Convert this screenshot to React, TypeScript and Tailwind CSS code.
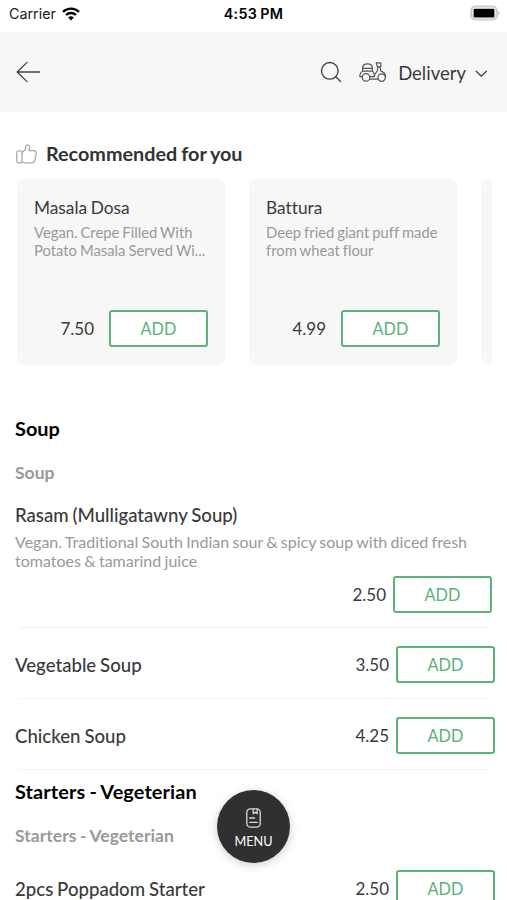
interface Dish {
  name: string;
  description?: string;
  price: string;
}

const recommended: Dish[] = [
  { name: "Masala Dosa", description: "Vegan. Crepe Filled With Potato Masala Served Wi...", price: "7.50" },
  { name: "Battura", description: "Deep fried giant puff made from wheat flour", price: "4.99" },
];

const soups: Dish[] = [
  { name: "Vegetable Soup", price: "3.50" },
  { name: "Chicken Soup", price: "4.25" },
];

function StatusBar() {
  return (
    <div className="h-8 shrink-0 px-2 grid grid-cols-3 items-start font-[Inter,sans-serif] text-black">
      <div className="flex items-center gap-1.5 pt-1 pl-px text-[14.3px] leading-5 text-[#222]">
        <span>Carrier</span>
        <svg className="text-black" width="18" height="14" viewBox="0 0 18 14" fill="none" stroke="currentColor" strokeWidth="2.3">
          <path d="M1 4.9a11.5 11.5 0 0 1 16 0" />
          <path d="M4 8a7.2 7.2 0 0 1 10 0" />
          <path d="M9 13.4 6.2 10.5a4 4 0 0 1 5.6 0Z" fill="currentColor" stroke="none" />
        </svg>
      </div>
      <div className="pt-1 text-center text-[14.3px] leading-5 font-semibold tracking-[0.3px]">4:53 PM</div>
      <div className="flex justify-end pt-[5px]">
        <svg className="-mr-px" width="30" height="16" viewBox="0 0 30 16">
          <rect x="1.3" y="1.5" width="25.4" height="13" rx="4" fill="#fff" stroke="#cbcbcb" strokeWidth="2.2" />
          <rect x="3.6" y="3.8" width="20.8" height="8.6" rx="1" fill="#000" />
          <path d="M28.2 6c1.6.6 1.6 3.6 0 4.2Z" fill="#b5b5b5" />
        </svg>
      </div>
    </div>
  );
}

function ScooterIcon() {
  return (
    <svg width="28" height="20" viewBox="0 0 28 20" fill="none" stroke="#555" strokeWidth="1.2" strokeLinecap="round" strokeLinejoin="round">
      <circle cx="7" cy="15.4" r="3.8" />
      <circle cx="22.6" cy="15.6" r="3.7" />
      <path d="M3.2 14.6H.8c0-2.6 1.2-4.8 3.2-5.4h9.6c1.2 1.4 1.8 3.2 1.8 5.4h-4.6" />
      <path d="M3.6 9V6.2C3.6 3.2 5.6 1.8 8.5 1.8s4.9 1.4 4.9 4.4V9M3.6 6.4h9.8" />
      <path d="M17.2.8h4.6v4h-3.4Z" />
      <path d="M18.6 4.8v3c0 2-3.2 3.2-3.2 6.8M21 4.8l.8 4.4c3 .8 4.8 2.8 4.8 5.4M10.4 17.2h8.8" />
    </svg>
  );
}

function Header() {
  return (
    <header className="h-20 shrink-0 flex items-center bg-[#f7f7f7] pl-4 pr-[19px] text-[#3a3a3a]">
      <svg width="25" height="22" viewBox="0 0 25 22" fill="none" stroke="#444" strokeWidth="1.3" strokeLinecap="round" strokeLinejoin="round">
        <path d="M23.6 11H1.2M11 1.4 1.2 11 11 20.6" />
      </svg>
      <svg className="ml-auto" width="22" height="22" viewBox="0 0 22 22" fill="none" stroke="#444" strokeWidth="1.4" strokeLinecap="round">
        <circle cx="9.8" cy="9.8" r="8.3" />
        <path d="m15.8 15.8 4.7 4.7" />
      </svg>
      <div className="ml-[17px]">
        <ScooterIcon />
      </div>
      <span className="ml-[11px] mt-0.5 text-[18.5px] leading-6">Delivery</span>
      <svg className="ml-[9px] mt-1" width="13" height="8" viewBox="0 0 13 8" fill="none" stroke="#444" strokeWidth="1.3" strokeLinecap="round" strokeLinejoin="round">
        <path d="m1.2 1.2 5.1 5.1 5.1-5.1" />
      </svg>
    </header>
  );
}

function AddButton() {
  return (
    <button className="w-[99px] h-[37px] pt-0.5 shrink-0 rounded-[3px] border-2 border-[#5bb37c] bg-white text-[16.3px] leading-none text-[#58b17a]">
      ADD
    </button>
  );
}

function RecommendedCard({ dish }: { dish: Dish }) {
  return (
    <div className="w-52 h-[186px] shrink-0 flex flex-col rounded-lg bg-[#f7f7f7] pl-[17px] pr-[17px] pt-[17px] pb-[18px]">
      <h3 className="text-[17.3px] leading-[23px] text-[#3a3a3a]">{dish.name}</h3>
      <p className="mt-1 -mr-2 w-[176px] text-[14.8px] leading-[18px] text-[#999]">{dish.description}</p>
      <div className="mt-auto flex items-center justify-end gap-[15px]">
        <span className="pt-px text-[17px] text-[#3a3a3a]">{dish.price}</span>
        <AddButton />
      </div>
    </div>
  );
}

function DishRow({ dish }: { dish: Dish }) {
  return (
    <div className="h-[71px] flex items-center pt-1 pl-[15px] pr-3">
      <h3 className="pt-[3px] text-[18.6px] font-medium text-[#3a3a3a]">{dish.name}</h3>
      <span className="ml-auto mr-[7px] pt-px text-[17px] text-[#3a3a3a]">{dish.price}</span>
      <AddButton />
    </div>
  );
}

function Divider() {
  return <div className="h-px -mb-px ml-5 mr-[18px] bg-[#f3f3f3]" />;
}

export default function App() {
  return (
    <div className="relative w-full h-[900px] overflow-hidden flex flex-col bg-white font-[Lato,sans-serif] [font-variant-ligatures:none] [word-spacing:-0.8px]">
      <StatusBar />
      <Header />

      <section className="shrink-0 pt-[30px]">
        <div className="h-6 flex items-center gap-[9px] pl-4">
          <svg width="21" height="20" viewBox="0 0 21 20" fill="none" stroke="#aaa" strokeWidth="1.3" strokeLinejoin="round">
            <rect x="0.8" y="6.8" width="5.2" height="12" rx="1.6" />
            <path d="M6 8.4C8.4 7.2 9.8 5.2 9.8 2.6c0-2.6 3.8-2.4 3.8.8 0 1.3-.3 2.2-.8 3.3h4.9c1.7 0 2.8 1.2 2.5 2.8l-1.3 6.7c-.3 1.8-1.2 2.6-2.7 2.6H9c-1.2 0-2.2-.4-3-1.2" />
          </svg>
          <h2 className="-mt-0.5 text-[19.8px] leading-6 font-bold text-[#333]">Recommended for you</h2>
        </div>
        <div className="mt-[13px] ml-[17px] mr-[15px] flex gap-6 overflow-hidden">
          {recommended.map((dish) => (
            <RecommendedCard key={dish.name} dish={dish} />
          ))}
          <div className="w-52 h-[186px] shrink-0 rounded-lg bg-[#f7f7f7]" />
        </div>
      </section>

      <section className="shrink-0 pt-[51px]">
        <h2 className="pl-[15px] text-[19.9px] leading-6 font-bold text-black">Soup</h2>
        <h4 className="mt-[21px] pl-[15px] text-[17.5px] leading-6 font-bold text-[#999]">Soup</h4>
        <div className="pt-[18px] pl-[15px] pr-[15px] pb-[14px]">
          <h3 className="text-[18.6px] leading-6 font-medium text-[#3a3a3a]">Rasam (Mulligatawny Soup)</h3>
          <p className="mt-[5px] text-[16px] leading-[19px] text-[#999]">
            Vegan. Traditional South Indian sour &amp; spicy soup with diced fresh tomatoes &amp; tamarind juice
          </p>
          <div className="mt-1.5 flex items-center justify-end gap-[7px]">
            <span className="pt-px text-[17px] text-[#3a3a3a]">2.50</span>
            <AddButton />
          </div>
        </div>
        <Divider />
        {soups.map((dish) => (
          <div key={dish.name}>
            <DishRow dish={dish} />
            <Divider />
          </div>
        ))}
      </section>

      <section className="shrink-0 pt-2.5">
        <h2 className="pl-[15px] text-[19.9px] leading-6 font-bold tracking-[0.1px] text-black">Starters - Vegeterian</h2>
        <h4 className="mt-[21px] pl-[15px] text-[17.5px] leading-6 font-bold tracking-[0.05px] text-[#999]">Starters - Vegeterian</h4>
        <div className="mt-[3px]">
          <DishRow dish={{ name: "2pcs Poppadom Starter", price: "2.50" }} />
        </div>
      </section>

      <button className="absolute left-[217px] top-[790px] size-[73px] pt-[3px] rounded-full bg-[#303030] flex flex-col items-center justify-center text-white shadow-[0_2px_10px_rgba(0,0,0,0.2)]">
        <svg width="15" height="20" viewBox="0 0 15 20" fill="none" stroke="#d8d8d8" strokeWidth="1.3" strokeLinecap="round" strokeLinejoin="round">
          <rect x="0.8" y="0.8" width="13.4" height="18.4" rx="3.6" />
          <path d="M7.2 1v4.6l2-1.4 2 1.4V1M3.8 10h4.8M3.8 14.4h7.4" />
        </svg>
        <span className="mt-[5px] text-[12.7px] leading-4">MENU</span>
      </button>
    </div>
  );
}
